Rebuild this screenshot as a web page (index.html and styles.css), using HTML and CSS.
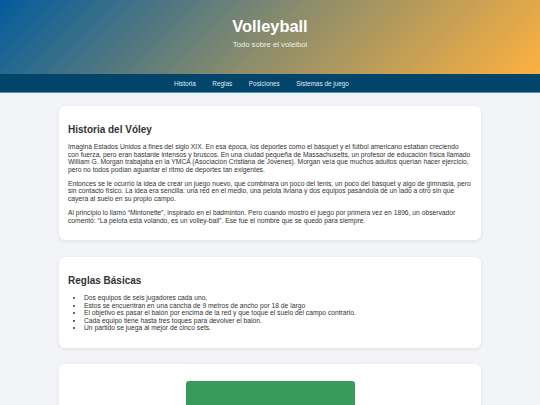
FILE: index.html
```html
<!DOCTYPE html>
<html lang="es">
<head>
<meta charset="UTF-8">
<meta name="viewport" content="width=device-width, initial-scale=1.0">
<title>Volleyball</title>
<link rel="stylesheet" href="styles.css">
</head>
<body>

<header class="hero">
    <h1 class="hero-title">Volleyball</h1>
    <p class="hero-subtitle">Todo sobre el voleibol</p>
</header>

<nav class="main-nav">
    <a href="#historia">Historia</a>
    <a href="#reglas">Reglas</a>
    <a href="#posiciones">Posiciones</a>
    <a href="#sistemas">Sistemas de juego</a>
</nav>

<main class="content">
    <section class="card" id="historia">
        <h2>Historia del Vóley</h2>
        <p>Imaginá Estados Unidos a fines del siglo XIX. En esa época, los deportes como el básquet y el fútbol americano estaban creciendo<br>con fuerza, pero eran bastante intensos y bruscos. En una ciudad pequeña de Massachusetts, un profesor de educación física llamado William G. Morgan trabajaba en la YMCA (Asociación Cristiana de Jóvenes). Morgan veía que muchos adultos querían hacer ejercicio, pero no todos podían aguantar el ritmo de deportes tan exigentes.</p>
        <p>Entonces se le ocurrió la idea de crear un juego nuevo, que combinara un poco del tenis, un poco del básquet y algo de gimnasia, pero sin contacto físico. La idea era sencilla: una red en el medio, una pelota liviana y dos equipos pasándola de un lado a otro sin que cayera al suelo en su propio campo.</p>
        <p>Al principio lo llamó “Mintonette”, inspirado en el bádminton. Pero cuando mostró el juego por primera vez en 1896, un observador comentó: “La pelota está volando, es un volley-ball”. Ese fue el nombre que se quedó para siempre.</p>
    </section>

    <section class="card" id="reglas">
        <h2>Reglas Básicas</h2>
        <ul>
            <li>Dos equipos de seis jugadores cada uno.</li>
            <li>Estos se encuentran en una cancha de 9 metros de ancho por 18 de largo</li>
            <li>El objetivo es pasar el balón por encima de la red y que toque el suelo del campo contrario.</li>
            <li>Cada equipo tiene hasta tres toques para devolver el balón.</li>
            <li>Un partido se juega al mejor de cinco sets.</li>
        </ul>
    </section>

    <!-- Cancha -->
    <section class="card" id="posiciones">
        <div class="court"></div>
    </section>
</main>

</body>
</html>
```

FILE: styles.css
```css
body {
    font-family: "Liberation Sans", Arial, sans-serif;
    font-size: 6.4px;
    color: #333;
    background-color: #f3f4f8;
    margin: 0;
    padding: 0;
}
.hero {
    background: linear-gradient(135deg, #035c9d 0%, #8a8c6c 50%, #fdb13f 100%);
    color: white;
    text-align: center;
    padding: 17px 0 26px;
    height: 31px;
}
.hero-title {
    font-size: 16.4px;
    margin: 0 0 3.5px;
}
.hero-subtitle {
    font-size: 7.7px;
    margin: 0;
    color: #eef0ea;
}
.main-nav {
    background-color: #03456a;
    border-bottom: 1px solid #4f93b6;
    display: flex;
    justify-content: center;
    padding: 6px 17px 5px 0;
}
.main-nav a {
    color: #dcecf7;
    text-decoration: none;
    margin: 0 8.3px;
}
.content {
    max-width: 422px;
    margin: 0 auto;
    padding-top: 13px;
}
.card {
    background-color: white;
    border-radius: 6px;
    box-shadow: 0 1px 4px rgba(0, 0, 0, 0.09);
    padding: 9.6px 8.5px 9.6px 9px;
    margin-bottom: 16.5px;
}
.card h2 {
    font-size: 10px;
    margin: 8.3px 0;
}
.card p,
.card ul {
    font-size: 6.72px;
    line-height: 7.5px;
    margin: 6.7px 0;
}
.card ul {
    padding-left: 16px;
}
.court {
    width: 169px;
    height: 110px;
    margin: 7.4px auto 0;
    background-color: #389b5c;
    border-radius: 3px;
}
```
